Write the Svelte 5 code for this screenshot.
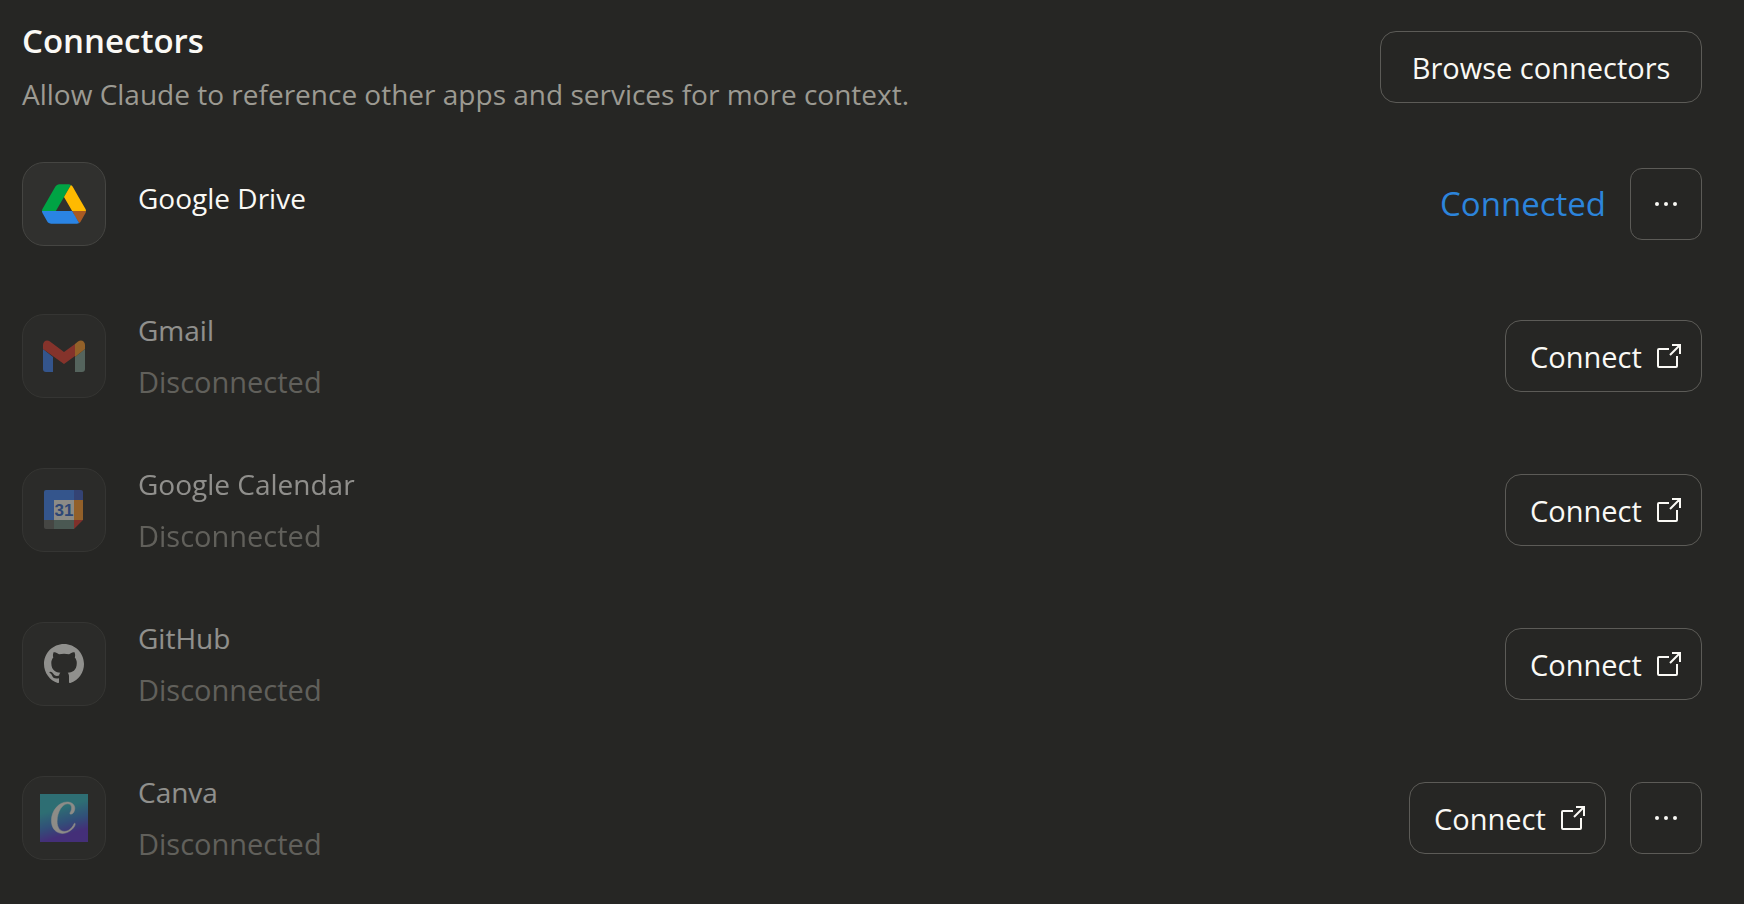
<script>
	const connectors = [
		{ id: 'drive', name: 'Google Drive', connected: true, menu: true },
		{ id: 'gmail', name: 'Gmail', connected: false, menu: false },
		{ id: 'calendar', name: 'Google Calendar', connected: false, menu: false },
		{ id: 'github', name: 'GitHub', connected: false, menu: false },
		{ id: 'canva', name: 'Canva', connected: false, menu: true }
	];
</script>

<main class="connectors">
	<header class="header">
		<div class="heading">
			<h1>Connectors</h1>
			<p>Allow Claude to reference other apps and services for more context.</p>
		</div>
		<button class="button browse">Browse connectors</button>
	</header>

	<ul class="list">
		{#each connectors as connector (connector.id)}
			<li class="row">
				<div class="app" class:disconnected={!connector.connected}>
					<div class="tile">
						{#if connector.id === 'drive'}
							<svg width="44" height="40" viewBox="0 0 87.3 78" aria-hidden="true">
								<path fill="#a85a24" d="M73.55 76.8c1.35-.8 2.5-1.9 3.3-3.3l1.6-2.75 7.65-13.25c.8-1.4 1.2-2.95 1.2-4.5H59.8l5.85 11.5z" />
								<path fill="#00a344" d="M43.65 25 57.4 1.2C56.05.4 54.5 0 52.9 0H34.4c-1.6 0-3.15.45-4.5 1.2a9 9 0 0 0-3.3 3.3L1.2 48.5A9 9 0 0 0 0 53h27.5z" />
								<path fill="#2a84e4" d="M59.8 53H0c0 1.55.4 3.1 1.2 4.5l9.25 16a9 9 0 0 0 3.3 3.3c1.35.8 2.9 1.2 4.5 1.2h50.8c1.6 0 3.15-.45 4.5-1.2z" />
								<path fill="#ffba00" d="m73.4 26.5-12.7-22a9 9 0 0 0-3.3-3.3L43.65 25 59.8 53h27.45c0-1.55-.4-3.1-1.2-4.5z" />
							</svg>
						{:else if connector.id === 'gmail'}
							<svg width="42" height="32" viewBox="0 0 42 32" aria-hidden="true">
								<path fill="#4285f4" d="M0 9l10 8v15H3a3 3 0 0 1-3-3z" />
								<path fill="#84a296" d="M32 17l10-8v20a3 3 0 0 1-3 3h-7z" />
								<path fill="#ff9d2e" d="M32 4l3-2.5C38-1 42 1 42 5v4l-10 8z" />
								<path fill="#e34133" d="M0 9V5C0 1 4-1 7 1.5L21 12l11-8v12L21 24z" />
							</svg>
						{:else if connector.id === 'calendar'}
							<svg width="40" height="40" viewBox="0 0 40 40" aria-hidden="true">
								<path fill="#4285f4" d="M2 0h29v10H10v20H0V2a2 2 0 0 1 2-2z" />
								<path fill="#4261c4" d="M30 0h7a2 2 0 0 1 2 2v8h-9z" />
								<path fill="#ff9a2e" d="M30 10h9v20h-9z" />
								<path fill="#6f8a80" d="M10 30h20v9H10z" />
								<path fill="#656663" d="M0 30h10v9H2a2 2 0 0 1-2-2z" />
								<path fill="#d93a30" d="M30 30h9l-9 9z" />
								<path fill="#f3f1e9" d="M10 10h20v20H10z" />
								<text x="20" y="26" text-anchor="middle">31</text>
							</svg>
						{:else if connector.id === 'github'}
							<svg width="40" height="40" viewBox="0 0 16 16" aria-hidden="true">
								<path fill="#faf9f5" d="M8 0C3.58 0 0 3.58 0 8c0 3.54 2.29 6.53 5.47 7.59.4.07.55-.17.55-.38 0-.19-.01-.82-.01-1.49-2.01.37-2.53-.49-2.69-.94-.09-.23-.48-.94-.82-1.13-.28-.15-.68-.52-.01-.53.63-.01 1.08.58 1.23.82.72 1.21 1.87.87 2.33.66.07-.52.28-.87.51-1.07-1.78-.2-3.64-.89-3.64-3.95 0-.87.31-1.59.82-2.15-.08-.2-.36-1.02.08-2.12 0 0 .67-.21 2.2.82.64-.18 1.32-.27 2-.27s1.36.09 2 .27c1.53-1.04 2.2-.82 2.2-.82.44 1.1.16 1.92.08 2.12.51.56.82 1.27.82 2.15 0 3.07-1.87 3.75-3.65 3.95.29.25.54.73.54 1.48 0 1.07-.01 1.93-.01 2.2 0 .21.15.46.55.38A8.01 8.01 0 0 0 16 8c0-4.42-3.58-8-8-8z" />
							</svg>
						{:else}
							<svg width="48" height="48" viewBox="0 0 48 48" aria-hidden="true">
								<defs>
									<linearGradient id="canva-fill" x1=".3" y1="0" x2=".6" y2="1">
										<stop offset=".3" stop-color="#36b5c2" />
										<stop offset=".6" stop-color="#3d79cc" />
										<stop offset=".85" stop-color="#6238cc" />
									</linearGradient>
								</defs>
								<path fill="url(#canva-fill)" d="M0 0h48v48H0z" />
								<path
									fill="#f3f1ea"
									stroke="#f3f1ea"
									stroke-width=".5"
									d="M34.8 29.2c-.3 0-.5.2-.8.8-2.5 5-6 7.4-9.6 7.4-4.4 0-7.3-4-7.3-10C17.1 17.5 22.5 9.8 27.7 9.8c2.5 0 3.9 1.5 3.9 4.1 0 2.9-1.7 4.4-1.7 5.5 0 .5.4.8 1 .8 2 0 3.9-2.7 3.9-5.9C34.8 10.5 31.6 8 27 8 18.8 8 11.4 16.6 11.4 26.6c0 7.6 4.4 12.8 11.1 12.8 7.2 0 12.7-6.5 12.7-9.3 0-.6-.1-.9-.4-.9z"
								/>
							</svg>
						{/if}
					</div>
					<div class="info">
						<h2>{connector.name}</h2>
						{#if !connector.connected}
							<p class="note">Disconnected</p>
						{/if}
					</div>
				</div>

				<div class="actions">
					{#if connector.connected}
						<span class="status">Connected</span>
					{:else}
						<button class="button connect">
							Connect
							<svg width="24" height="24" viewBox="0 0 24 24" aria-hidden="true">
								<path d="M12 5H2a1 1 0 0 0-1 1v16a1 1 0 0 0 1 1h17a1 1 0 0 0 1-1V12M15 1h8v9M23 1 13 11" />
							</svg>
						</button>
					{/if}
					{#if connector.menu}
						<button class="button more" aria-label="More options for {connector.name}">
							<svg width="22" height="6" viewBox="0 0 22 6" aria-hidden="true">
								<circle cx="2" cy="3" r="2" />
								<circle cx="11" cy="3" r="2" />
								<circle cx="20" cy="3" r="2" />
							</svg>
						</button>
					{/if}
				</div>
			</li>
		{/each}
	</ul>
</main>

<style>
	:global(body) {
		background: #262624;
	}

	.connectors {
		padding: 20px 42px 40px 22px;
		color: #faf9f5;
		font-family: 'Open Sans', 'Noto Sans', sans-serif;
		font-size: 28px;
	}

	h1,
	h2,
	p,
	ul {
		margin: 0;
		padding: 0;
	}

	.header {
		display: flex;
		align-items: center;
		justify-content: space-between;
		gap: 24px;
		margin-bottom: 47px;
	}

	.heading {
		display: flex;
		flex-direction: column;
		gap: 13px;
	}

	h1 {
		font-size: 33px;
		font-weight: 600;
		line-height: 42px;
	}

	p {
		color: #9c9a92;
		line-height: 39px;
	}

	.list {
		display: flex;
		flex-direction: column;
		gap: 64px;
		list-style: none;
	}

	.row {
		display: flex;
		align-items: center;
		justify-content: space-between;
		min-height: 86px;
	}

	.app {
		display: flex;
		align-items: center;
		gap: 32px;
	}

	.disconnected {
		opacity: 0.5;
	}

	.tile {
		display: flex;
		align-items: center;
		justify-content: center;
		box-sizing: border-box;
		width: 84px;
		height: 84px;
		border: 1px solid #454542;
		border-radius: 22px;
		background: #30302e;
	}

	.tile text {
		fill: #3467c8;
		font-family: 'Liberation Sans', sans-serif;
		font-size: 17px;
		font-weight: 700;
	}

	h2 {
		margin-bottom: 12px;
		font-size: 28px;
		font-weight: 400;
		line-height: 39px;
	}

	.note {
		font-size: 29px;
	}

	.actions {
		display: flex;
		align-items: center;
		gap: 24px;
	}

	.status {
		color: #2c84db;
		font-size: 33px;
		line-height: 42px;
	}

	.button {
		display: flex;
		align-items: center;
		justify-content: center;
		box-sizing: border-box;
		height: 72px;
		padding: 0;
		border: 1px solid #5c5b57;
		border-radius: 16px;
		background: transparent;
		color: inherit;
		font: inherit;
		font-size: 29px;
		font-weight: 500;
		cursor: pointer;
	}

	.button:hover {
		background: #30302e;
	}

	.browse {
		min-width: 322px;
		flex-shrink: 0;
	}

	.connect {
		justify-content: space-between;
		gap: 13px;
		min-width: 197px;
		padding: 0 20px 0 24px;
	}

	.connect svg {
		fill: none;
		stroke: currentColor;
		stroke-width: 2;
	}

	.more {
		width: 72px;
		border-radius: 12px;
		fill: currentColor;
	}
</style>
